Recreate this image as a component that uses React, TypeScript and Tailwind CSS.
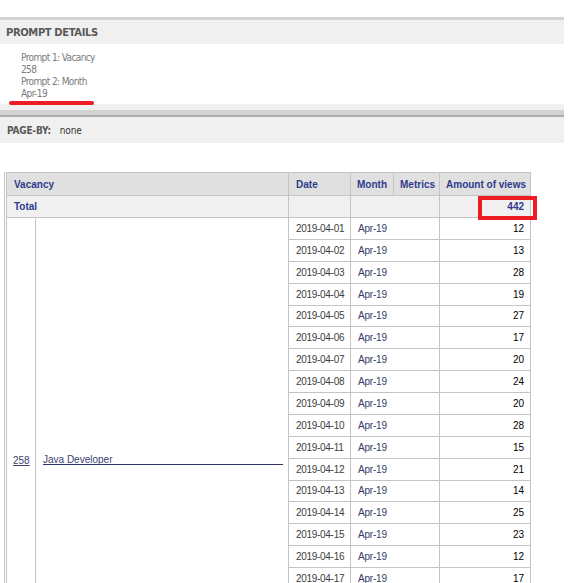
const views = [12, 13, 28, 19, 27, 17, 20, 24, 20, 28, 15, 21, 14, 25, 23, 12, 17, 22, 19, 26, 18, 22];

const rows = views.map((v, i) => ({
  date: `2019-04-${String(i + 1).padStart(2, "0")}`,
  month: "Apr-19",
  views: v,
}));

export default function App() {
  return (
    <div className="w-[569px] h-[583px] overflow-hidden bg-white font-['Liberation_Sans',Arial,sans-serif]">
      <div className="w-[564px]">
        <div className="h-[17px]" />
        <div className="h-[3px] bg-[#d4d4d4]" />
        <div className="h-[24px] bg-[#f0f0f0] flex items-center pl-[6px] text-[10px] font-bold text-[#595959] font-['DejaVu_Sans',sans-serif] tracking-[-0.4px]">
          PROMPT DETAILS
        </div>
        <div className="relative h-[60px] pt-[8px] pl-[21px] text-[10px] leading-[12px] text-[#7a7a7a] font-['DejaVu_Sans_Condensed','DejaVu_Sans',sans-serif] tracking-[-0.6px]">
          <div>Prompt 1: Vacancy</div>
          <div>258</div>
          <div>Prompt 2: Month</div>
          <div>Apr-19</div>
          <div className="absolute left-[9px] top-[57px] w-[85px] h-[4px] rounded-full bg-[#ed1c24]" />
        </div>
        <div className="h-[6px] bg-[#f0f0f0]" />
        <div className="h-[5px] bg-[#d2d2d2]" />
        <div className="h-[2px] bg-[#ababab]" />
        <div className="h-[26px] bg-[#f0f0f0] flex items-center pl-[7px] text-[10px] font-['DejaVu_Sans_Condensed','DejaVu_Sans',sans-serif] tracking-[-0.2px]">
          <span className="font-bold text-[#595959]">PAGE-BY:</span>
          <span className="ml-[9px] text-[#333]">none</span>
        </div>
      </div>

      <div className="relative mt-[29px] ml-[4px] border-l border-[#c4c4c4] pl-px w-[527px]">
        <table className="w-[524px] table-fixed border-collapse text-[10px] text-[#333]">
          <colgroup>
            <col className="w-[29px]" />
            <col className="w-[253px]" />
            <col className="w-[62px]" />
            <col className="w-[43px]" />
            <col className="w-[46px]" />
            <col className="w-[91px]" />
          </colgroup>
          <thead>
            <tr className="h-[23px] bg-[#e0e0e0] text-[#2e3b8c] font-bold">
              <th colSpan={2} className="border border-[#c4c4c4] text-left pl-[7px] font-bold">Vacancy</th>
              <th className="border border-[#c4c4c4] text-left pl-[7px] font-bold">Date</th>
              <th className="border border-[#c4c4c4] text-left pl-[6px] font-bold">Month</th>
              <th className="border border-[#c4c4c4] text-left pl-[6px] font-bold">Metrics</th>
              <th className="border border-[#c4c4c4] text-left pl-[6px] font-bold whitespace-nowrap">Amount of views</th>
            </tr>
          </thead>
          <tbody>
            <tr className="h-[22px] bg-[#f0f0f0] text-[#2e3b8c] font-bold">
              <td colSpan={2} className="border border-[#c4c4c4] pl-[7px]">Total</td>
              <td className="border border-[#c4c4c4]" />
              <td colSpan={2} className="border border-[#c4c4c4]" />
              <td className="border border-[#c4c4c4] text-right pr-[6px]">442</td>
            </tr>
            {rows.map((r, i) => (
              <tr key={r.date} className="h-[21.875px]">
                {i === 0 && (
                  <>
                    <td rowSpan={rows.length} className="border border-[#c4c4c4] pl-[6px] pt-[4px] align-middle">
                      <span className="underline text-[#3a4373]">258</span>
                    </td>
                    <td rowSpan={rows.length} className="border border-[#c4c4c4] pl-[7px] pr-[5px] align-middle">
                      <div className="border-b border-[#2d3566] pt-[3px] leading-[9px] text-[#3a4373]">Java Developer</div>
                    </td>
                  </>
                )}
                <td className="border border-[#c4c4c4] pl-[7px] tracking-[-0.3px] text-[#3d3d3d]">{r.date}</td>
                <td colSpan={2} className="border border-[#c4c4c4] pl-[7px] tracking-[-0.2px] text-[#333a66]">{r.month}</td>
                <td className="border border-[#c4c4c4] text-right pr-[6px] text-black">{r.views}</td>
              </tr>
            ))}
          </tbody>
        </table>
        <div className="absolute left-[473px] top-[24px] w-[59px] h-[24px] border-4 border-[#ed1c24]" />
      </div>
    </div>
  );
}
